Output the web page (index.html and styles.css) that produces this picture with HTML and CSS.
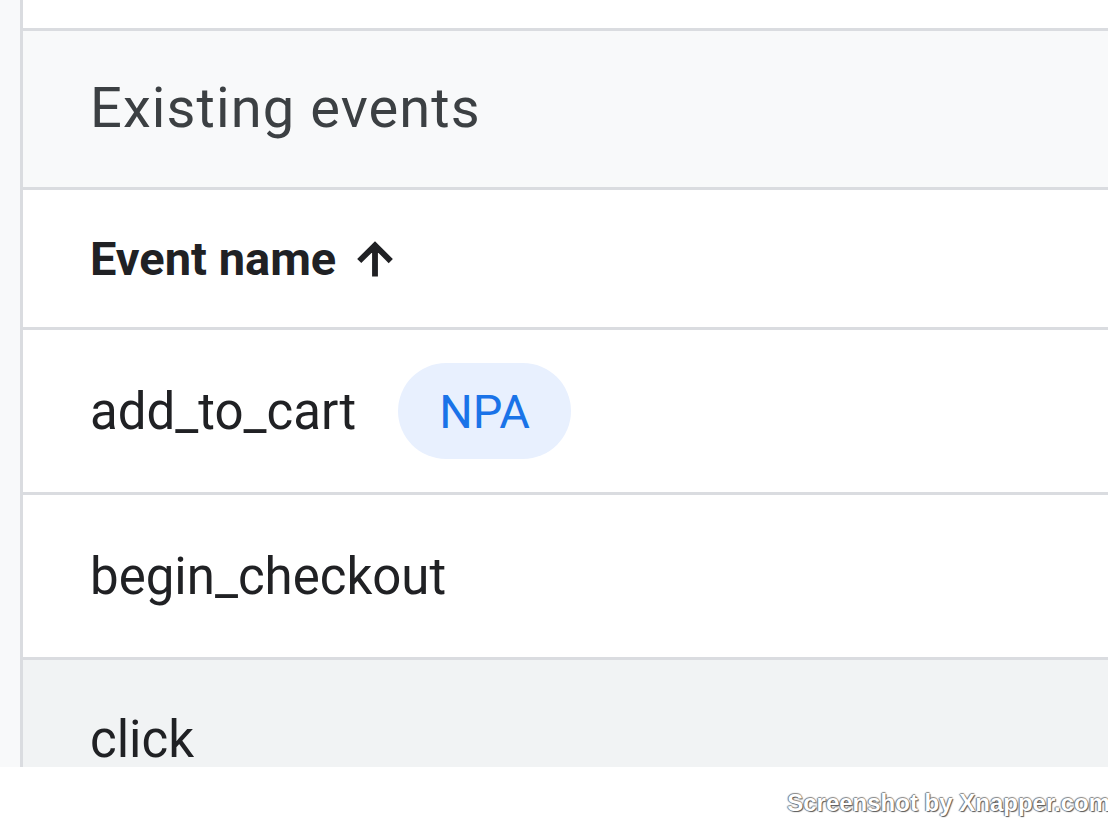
FILE: index.html
```html
<!DOCTYPE html>
<html>
<head>
<meta charset="utf-8">
<link rel="stylesheet" href="styles.css">
</head>
<body>
<div class="shot">
  <div class="rail"></div>
  <div class="panel">
    <div class="top"></div>
    <div class="title">Existing events</div>
    <div class="colhead">Event name
      <svg class="arrow" viewBox="0 0 24 24" width="50" height="50"><path d="M4 12l1.41 1.41L11 7.83V20h2V7.83l5.58 5.59L20 12l-8-8-8 8z" fill="#202124" stroke="#202124" stroke-width="0.8"/></svg>
    </div>
    <div class="row">add_to_cart <span class="chip">NPA</span></div>
    <div class="row">begin_checkout</div>
    <div class="row hover">click</div>
  </div>
</div>
<div class="footer"><span class="mark">Screenshot by Xnapper.com</span></div>
</body>
</html>
```
FILE: styles.css
```css
* { box-sizing: border-box; }
html, body { margin: 0; padding: 0; background: #fff; }
body { font-family: Roboto, "Liberation Sans", sans-serif; width: 1108px; height: 818px; overflow: hidden; }
.shot { display: flex; height: 767px; overflow: hidden; }
.rail { background: #f8f9fa; border-right: 3px solid #dadce0; flex: none; width: 23px; }
.panel { flex: 1; display: flex; flex-direction: column; }
.top { height: 31px; background: #fff; border-bottom: 3px solid #dadce0; flex: none; }
.title { height: 159px; flex: none; background: #f8f9fa; border-bottom: 3px solid #dadce0; padding-left: 67px; display: flex; align-items: center; font-size: 56px; line-height: 1; letter-spacing: 1.1px; color: #3c4043; padding-bottom: 2px; }
.colhead { height: 140px; flex: none; border-bottom: 3px solid #dadce0; padding-left: 67px; display: flex; align-items: center; font-size: 47px; line-height: 1; font-weight: 700; color: #202124; }
.arrow { margin-left: 14px; }
.row { height: 165px; flex: none; border-bottom: 3px solid #dadce0; padding-left: 67px; display: flex; align-items: center; font-size: 51px; line-height: 1; color: #202124; }
.chip { margin-left: 42px; background: #e8f0fe; color: #1a73e8; border-radius: 48px; height: 96px; padding: 0 41px; display: inline-flex; align-items: center; font-size: 47px; }
.hover { background: #f1f3f4; border-bottom: none; padding-bottom: 6px; }
.footer { height: 51px; display: flex; justify-content: flex-end; align-items: flex-end; padding-bottom: 1px; }
.mark { font-family: "Liberation Sans", Arial, sans-serif; font-weight: 700; font-size: 24px; color: #fff; text-shadow: 1px 1px 1px #555, -1px 0 1px #777, 0 -1px 1px #888; margin-right: -2px; }
```
